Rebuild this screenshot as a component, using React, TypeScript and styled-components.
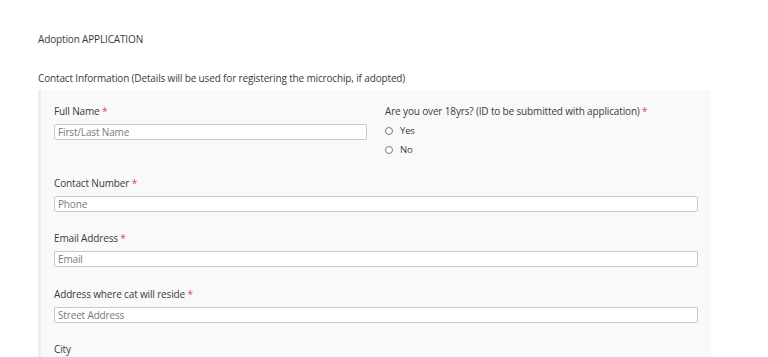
import React from "react";
import styled, { createGlobalStyle } from "styled-components";

const GlobalStyle = createGlobalStyle`
  html, body {
    margin: 0;
    padding: 0;
    background: #ffffff;
  }
  body {
    font-family: "Open Sans", "Noto Sans", sans-serif;
    font-size: 10px;
    letter-spacing: -0.15px;
    color: #3b3b3b;
  }
`;

type Field = {
  label: string;
  placeholder: string;
  required?: boolean;
};

const singleFields: Field[] = [
  { label: "Contact Number", placeholder: "Phone", required: true },
  { label: "Email Address", placeholder: "Email", required: true },
  { label: "Address where cat will reside", placeholder: "Street Address", required: true },
];

const App = () => {
  return (
    <>
      <GlobalStyle />
      <Page>
        <PageTitle>Adoption APPLICATION</PageTitle>
        <SectionTitle>
          Contact Information (Details will be used for registering the microchip, if adopted)
        </SectionTitle>
        <Panel>
          <TwoCols>
            <FieldBlock>
              <Label>
                Full Name <Req>*</Req>
              </Label>
              <TextInput placeholder="First/Last Name" />
            </FieldBlock>
            <FieldBlock>
              <Label>
                Are you over 18yrs? (ID to be submitted with application) <Req>*</Req>
              </Label>
              <RadioList>
                {["Yes", "No"].map((opt) => (
                  <RadioRow key={opt}>
                    <RadioDot />
                    {opt}
                  </RadioRow>
                ))}
              </RadioList>
            </FieldBlock>
          </TwoCols>
          {singleFields.map((f) => (
            <FieldBlock key={f.label}>
              <Label>
                {f.label} {f.required && <Req>*</Req>}
              </Label>
              <TextInput placeholder={f.placeholder} />
            </FieldBlock>
          ))}
          <FieldBlock>
            <Label>City</Label>
          </FieldBlock>
        </Panel>
      </Page>
    </>
  );
};

const Page = styled.div`
  padding: 31px 0 0 38px;
  width: 673px;
`;

const PageTitle = styled.div`
  line-height: 16px;
  margin-bottom: 23px;
`;

const SectionTitle = styled.div`
  line-height: 16px;
  margin-bottom: 4px;
`;

const Panel = styled.div`
  background: #f9f9f9;
  border-left: 3px solid #eeeeee;
  padding: 13px 13px 0 13px;
  display: flex;
  flex-direction: column;
  gap: 18.5px;
  height: 254px;
  overflow: hidden;
`;

const TwoCols = styled.div`
  display: grid;
  grid-template-columns: 1fr 1fr;
  column-gap: 18px;
  margin-bottom: -2px;
`;

const FieldBlock = styled.div`
  display: flex;
  flex-direction: column;
  gap: 5px;
`;

const Label = styled.div`
  line-height: 16px;
  color: #3b3b3b;
`;

const Req = styled.span`
  color: #e0474c;
`;

const TextInput = styled.input`
  box-sizing: border-box;
  height: 16px;
  width: 100%;
  margin: 0;
  border: 1px solid #c9c9c9;
  border-radius: 2px;
  background: #ffffff;
  padding: 0 3px;
  font-family: inherit;
  font-size: 10px;
  letter-spacing: -0.15px;
  outline: none;
  &::placeholder {
    color: #7a7a7a;
  }
`;

const RadioList = styled.div`
  display: flex;
  flex-direction: column;
  gap: 3px;
  margin-top: -1px;
`;

const RadioRow = styled.div`
  display: flex;
  align-items: center;
  gap: 7px;
  font-size: 9.5px;
  line-height: 16px;
`;

const RadioDot = styled.span`
  box-sizing: border-box;
  width: 8px;
  height: 8px;
  border: 1px solid #777;
  border-radius: 50%;
  background: #fff;
`;

export default App;
